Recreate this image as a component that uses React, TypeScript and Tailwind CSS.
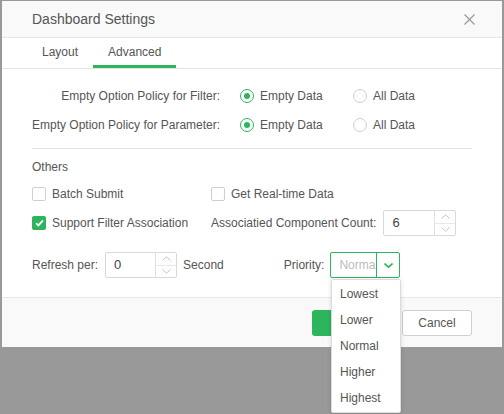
import React from 'react';

const green = '#2db55d';

function Radio({ checked, label }: { checked?: boolean; label: string }) {
  return (
    <label className="flex w-[113px] items-center gap-[6px]">
      <span
        className={
          checked
            ? 'flex h-[14px] w-[14px] items-center justify-center rounded-full border border-[#2db55d] bg-white'
            : 'flex h-[14px] w-[14px] items-center justify-center rounded-full border border-[#cfcfcf] bg-white'
        }
      >
        {checked && <span className="h-[6px] w-[6px] rounded-full bg-[#2db55d]" />}
      </span>
      <span>{label}</span>
    </label>
  );
}

function Checkbox({ checked, label }: { checked?: boolean; label: string }) {
  return (
    <label className="flex items-center gap-[6px]">
      {checked ? (
        <span className="flex h-[14px] w-[14px] items-center justify-center rounded-[2px] bg-[#2db55d]">
          <svg width="9" height="8" viewBox="0 0 9 8">
            <path d="M1 4.2 L3.4 6.4 L8 1.4" fill="none" stroke="#fff" strokeWidth="1.8" />
          </svg>
        </span>
      ) : (
        <span className="h-[14px] w-[14px] rounded-[2px] border border-[#cfcfcf] bg-white" />
      )}
      <span>{label}</span>
    </label>
  );
}

function Chevron({ up, color = '#c4c4c4', weight = 1 }: { up?: boolean; color?: string; weight?: number }) {
  return (
    <svg width="9" height="5" viewBox="0 0 9 5">
      <path d={up ? 'M0.5 4.5 L4.5 0.8 L8.5 4.5' : 'M0.5 0.5 L4.5 4.2 L8.5 0.5'} fill="none" stroke={color} strokeWidth={weight} />
    </svg>
  );
}

function NumberInput({ value, width }: { value: string; width: string }) {
  return (
    <div className={`flex h-[26px] ${width} rounded-[2px] border border-[#d9d9d9] bg-white`}>
      <div className="flex flex-1 items-center pl-[8px] text-[13px] text-[#444]">{value}</div>
      <div className="flex w-[21px] flex-col border-l border-[#e0e0e0]">
        <div className="flex flex-1 items-center justify-center border-b border-[#e8e8e8]">
          <Chevron up />
        </div>
        <div className="flex flex-1 items-center justify-center">
          <Chevron />
        </div>
      </div>
    </div>
  );
}

export default function App() {
  const options = ['Lowest', 'Lower', 'Normal', 'Higher', 'Highest'];
  return (
    <div className="relative h-[414px] w-[504px] overflow-hidden bg-[#999999] pl-[2px] pt-[1px] font-['Liberation_Sans',Arial,sans-serif] text-[12px] text-[#555]">
      <div className="flex h-[346px] w-[500px] flex-col bg-white">
        {/* Header */}
        <div className="flex h-[37px] items-center justify-between border-b border-[#e8e8e8] bg-[#f9f9f9] pl-[30px] pr-[27px]">
          <span className="text-[14px] text-[#555]">Dashboard Settings</span>
          <svg width="11" height="11" viewBox="0 0 11 11">
            <path d="M0.5 0.5 L10.5 10.5 M10.5 0.5 L0.5 10.5" stroke="#9a9a9a" strokeWidth="1.2" />
          </svg>
        </div>

        {/* Tabs */}
        <div className="flex h-[31px] border-b border-[#e5e5e5] pl-[25px]">
          <div className="flex h-[30px] items-center px-[15px] pb-[3px]">Layout</div>
          <div className="flex h-[30px] items-center border-b-[3px] border-[#2db55d] px-[15px]">Advanced</div>
        </div>

        {/* Content */}
        <div className="flex flex-1 flex-col px-[30px] pt-[14px]">
          <div className="flex h-[26px] items-center">
            <div className="w-[188px] whitespace-nowrap text-right">Empty Option Policy for Filter:</div>
            <div className="ml-[20px] flex">
              <Radio checked label="Empty Data" />
              <Radio label="All Data" />
            </div>
          </div>
          <div className="mt-[3px] flex h-[26px] items-center">
            <div className="w-[188px] whitespace-nowrap text-right">Empty Option Policy for Parameter:</div>
            <div className="ml-[20px] flex">
              <Radio checked label="Empty Data" />
              <Radio label="All Data" />
            </div>
          </div>

          <div className="mt-[10px] h-px bg-[#e3e3e3]" />

          <div className="mt-[9px] flex h-[18px] items-center">Others</div>

          <div className="mt-[8px] flex h-[20px] items-center">
            <div className="w-[179px]">
              <Checkbox label="Batch Submit" />
            </div>
            <Checkbox label="Get Real-time Data" />
          </div>

          <div className="mt-[6px] flex h-[26px] items-center">
            <div className="w-[179px]">
              <Checkbox checked label="Support Filter Association" />
            </div>
            <span>Associatied Component Count:</span>
            <div className="ml-[7px]">
              <NumberInput value="6" width="w-[73px]" />
            </div>
          </div>

          <div className="mt-[16px] flex h-[26px] items-center">
            <span>Refresh per:</span>
            <div className="ml-[7px]">
              <NumberInput value="0" width="w-[72px]" />
            </div>
            <span className="ml-[6px]">Second</span>
            <span className="ml-[60px]">Priority:</span>
            <div className="ml-[6px] flex h-[26px] w-[70px] rounded-[2px] border border-[#2db55d] bg-white">
              <div className="flex flex-1 items-center overflow-hidden whitespace-nowrap pl-[8px] text-[#bdbdbd]">Norma</div>
              <div className="flex w-[23px] items-center justify-center border-l border-[#2db55d]">
                <Chevron color={green} weight={1.6} />
              </div>
            </div>
          </div>
        </div>

        {/* Footer */}
        <div className="flex h-[50px] items-start justify-end gap-[10px] border-t border-[#e8e8e8] bg-[#f9f9f9] pr-[30px] pt-[12px]">
          <button className="h-[26px] w-[80px] rounded-[3px] bg-[#2db55d] text-white">OK</button>
          <button className="h-[26px] w-[70px] rounded-[3px] border border-[#d0d0d0] bg-white text-[#555]">Cancel</button>
        </div>
      </div>

      {/* Priority dropdown */}
      <div className="absolute left-[331px] top-[279px] w-[70px] rounded-[2px] border border-[#dcdcdc] bg-white py-[1px] shadow-[0_1px_4px_rgba(0,0,0,0.15)]">
        {options.map((o) => (
          <div key={o} className="flex h-[26px] items-center pl-[8px]">
            {o}
          </div>
        ))}
      </div>
    </div>
  );
}
